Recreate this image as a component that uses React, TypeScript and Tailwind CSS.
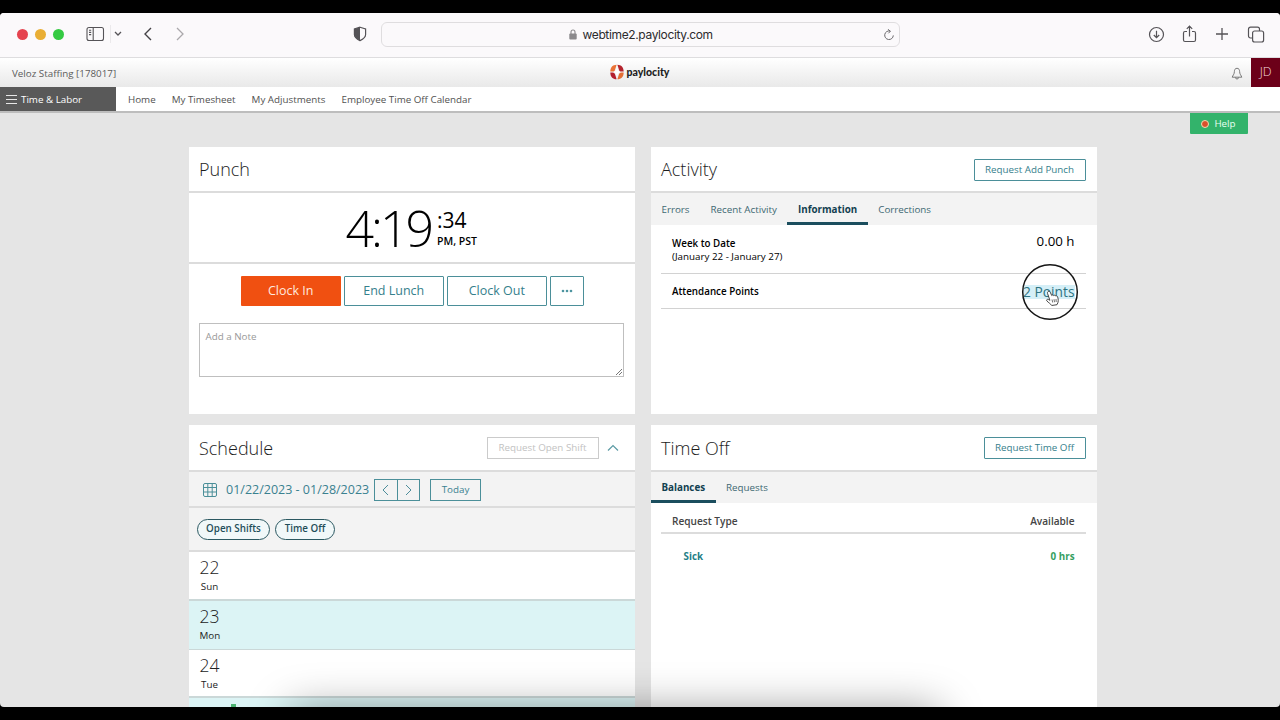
import React from "react";

/* --- SUB-COMPONENT: OUTLINE BUTTON --- */
const OutlineButton = ({ children, className = "" }: { children: React.ReactNode; className?: string }) => (
  <button className={`flex items-center justify-center border border-[#4b8f99] bg-white text-[#35808c] rounded-[1px] ${className}`}>
    {children}
  </button>
);

/* --- SUB-COMPONENT: CARD HEADER --- */
const CardHeader = ({ title, children, className = "" }: { title: string; children?: React.ReactNode; className?: string }) => (
  <div className={`flex items-center justify-between border-b-2 border-[#dcdcdc] pl-[10px] pr-[11px] ${className}`}>
    <h2 className="text-[18px] leading-[24px] font-light text-[#1c1c1c]">{title}</h2>
    {children}
  </div>
);

/* --- BROWSER TOOLBAR --- */
const BrowserBar = () => (
  <div className="flex h-[45px] shrink-0 items-center border-b border-[#dedddf] bg-[#fbf9fb] pb-[2px] text-[#555357]">
    <div className="ml-[17px] flex gap-[7px]">
      <span className="h-[11px] w-[11px] rounded-full bg-[#e5434f]" />
      <span className="h-[11px] w-[11px] rounded-full bg-[#e9ae35]" />
      <span className="h-[11px] w-[11px] rounded-full bg-[#35ca42]" />
    </div>

    <svg className="ml-[22px]" width="19" height="16" viewBox="0 0 19 16" fill="none" stroke="currentColor" strokeWidth="1.1">
      <rect x="1" y="1.5" width="16.5" height="13" rx="2" />
      <path d="M7.2 1.5v13M3 4.2h2.2M3 6.4h2.2M3 8.6h2.2" />
    </svg>
    <span className="ml-[5px] h-[18px] w-px bg-[#ebe9eb]" />
    <svg className="ml-[3px]" width="8" height="6" viewBox="0 0 8 6" fill="none" stroke="currentColor" strokeWidth="1.3">
      <path d="M1 1l3 3 3-3" />
    </svg>
    <svg className="ml-[21px]" width="10" height="14" viewBox="0 0 10 14" fill="none" stroke="#444246" strokeWidth="1.4">
      <path d="M8 1L2 7l6 6" />
    </svg>
    <svg className="ml-[22px]" width="10" height="14" viewBox="0 0 10 14" fill="none" stroke="#aaa8ab" strokeWidth="1.3">
      <path d="M2 1l6 6-6 6" />
    </svg>

    <svg className="ml-[168px]" width="14" height="16" viewBox="0 0 14 16" fill="none" stroke="currentColor" strokeWidth="1.2">
      <path d="M7 1.2L12.6 3v5.6c0 2.6-2.4 4.600-5.600 6-3.200-1.400-5.600-3.400-5.600-6V3z" />
      <path d="M7 1.200v13.400c-3.200-1.400-5.600-3.400-5.600-6V3z" fill="currentColor" stroke="none" />
    </svg>

    {/* Address field */}
    <div className="ml-[13.5px] flex h-[25px] w-[519px] items-center rounded-[6px] border border-[#dfdddf] pt-[1px] pr-[4px] font-['Inter',sans-serif]">
      <div className="ml-[187px] flex flex-1 items-center">
        <svg width="8" height="11" viewBox="0 0 8 11" fill="#8b898c">
          <rect x="0.3" y="4.5" width="7.4" height="6" rx="1" />
          <path d="M2 5V3a2 2 0 014 0v2" fill="none" stroke="#8b898c" strokeWidth="1.1" />
        </svg>
        <span className="ml-[6px] pt-[1px] text-[12px] leading-[16px] tracking-[-0.36px] text-[#2c2b2d]">webtime2.paylocity.com</span>
      </div>
      <svg width="12" height="12" viewBox="0 0 12 12" fill="none" stroke="#6b696c" strokeWidth="1">
        <path d="M7.2 2.1A4.3 4.3 0 1010.3 6.4M4.9 0.3L7.4 2.2 5.4 4.3" />
      </svg>
    </div>

    {/* Right side actions */}
    <svg className="ml-[248px]" width="17" height="17" viewBox="0 0 17 17" fill="none" stroke="currentColor" strokeWidth="1.2">
      <circle cx="8.5" cy="8.5" r="7" />
      <path d="M8.5 4.8v6.8M5.8 9l2.7 2.7L11.2 9" />
    </svg>
    <svg className="ml-[17px]" width="15" height="18" viewBox="0 0 15 18" fill="none" stroke="currentColor" strokeWidth="1.2">
      <path d="M5 6.5H3a1.5 1.5 0 00-1.5 1.5v7A1.5 1.5 0 003 16.5h9a1.5 1.5 0 001.5-1.5V8A1.5 1.5 0 0012 6.5h-2M7.5 11.5V1.3M4.8 3.9l2.7-2.7 2.7 2.7" />
    </svg>
    <svg className="ml-[18px]" width="14" height="14" viewBox="0 0 14 14" fill="none" stroke="currentColor" strokeWidth="1.3">
      <path d="M7 1v12M1 7h12" />
    </svg>
    <svg className="ml-[18px]" width="18" height="17" viewBox="0 0 18 17" fill="none" stroke="currentColor" strokeWidth="1.2">
      <rect x="5.6" y="5" width="11" height="11" rx="2" />
      <path d="M5.5 12H3.5a2 2 0 01-2-2V3.2a2 2 0 012-2h7a2 2 0 012 2V5" />
    </svg>
  </div>
);

/* --- COMPANY BAR + NAVIGATION --- */
const TopNav = () => (
  <>
    <div className="flex h-[29px] shrink-0 items-center justify-between bg-linear-to-b from-white to-[#e9e9e9]">
      <span className="w-[597px] pt-[3px] pl-[12px] text-[9.8px] leading-[14px] text-[#5b5b5b]">Veloz Staffing [178017]</span>
      <div className="flex items-center pr-[2px] pb-[2px]">
        <svg width="16" height="16" viewBox="0 0 16 16">
          <path d="M7.6.8C3.700 1 1.400 3.200 1.300 7.600h2.200c1.800 0 2.500-1.200 2.800-2.700z" fill="#ea7437" />
          <path d="M8.400.8c3.900.2 6.200 2.400 6.300 6.800h-2.200c-1.800 0-2.500-1.200-2.800-2.700z" fill="#b4242e" />
          <path d="M7.600 15.200c-3.900-.2-6.200-2.400-6.300-6.800h2.200c1.800 0 2.500 1.200 2.800 2.700z" fill="#b3202f" />
          <path d="M8.400 15.200c3.900-.2 6.200-2.400 6.300-6.800h-2.200c-1.800 0-2.500 1.200-2.800 2.700z" fill="#e46f35" />
          <path d="M8 3c.5 3.100 1.300 4.600 3.500 5-2.200.4-3 1.900-3.500 5-.5-3.100-1.300-4.600-3.500-5 2.200-.4 3-1.900 3.500-5z" fill="#fff" />
        </svg>
        <span className="ml-[2px] font-['Lato',sans-serif] text-[10.5px] leading-[14px] font-black text-[#1d1d22]">paylocity</span>
      </div>
      <div className="flex w-[597px] items-center justify-end gap-[8.5px]">
        <svg className="mt-[2px]" width="12" height="13" viewBox="0 0 12 13" fill="none" stroke="#6c6c6c" strokeWidth="0.9">
          <path d="M6 1.3c-1.9 0-2.6 1.5-2.6 3.2 0 2.7-1.700 4-2.200 5.700h9.600C10.300 8.500 8.600 7.200 8.600 4.500 8.600 2.800 7.900 1.300 6 1.300zM4.500 10.500a1.500 1.500 0 003 0" />
        </svg>
        <span className="flex h-[29px] w-[28.5px] items-center justify-center bg-[#6c0019] text-[12.5px] font-light text-[#f3d9de]">JD</span>
      </div>
    </div>

    <div className="flex h-[26px] shrink-0 items-stretch border-b-2 border-[#bdbdbd] bg-white text-[9.8px] text-[#515151]">
      <div className="flex w-[116px] items-center bg-[#595959] text-white">
        <svg className="ml-[6px]" width="11" height="10" viewBox="0 0 11 10" stroke="#e6e6e6" strokeWidth="1">
          <path d="M0 1.5h11M0 5.5h11M0 9.500h11" />
        </svg>
        <span className="ml-[4px] pt-[2px]">Time &amp; Labor</span>
      </div>
      <nav className="flex items-center gap-[16px] pt-[2px] pl-[12px]">
        <a>Home</a>
        <a>My Timesheet</a>
        <a>My Adjustments</a>
        <a>Employee Time Off Calendar</a>
      </nav>
    </div>
  </>
);

/* --- PUNCH --- */
const PunchCard = () => (
  <section className="h-[267px] bg-white">
    <CardHeader title="Punch" className="h-[46px]" />
    <div className="flex h-[71px] justify-center border-b-2 border-[#dcdcdc] pr-[1px]">
      <span className="text-[50px] leading-[70px] font-light tracking-[-3px] text-black">4:19</span>
      <div className="flex flex-col pt-[14px] pl-[6px] text-black">
        <span className="text-[21px] leading-[26px]">:34</span>
        <span className="text-[10.5px] leading-[16px] font-semibold">PM, PST</span>
      </div>
    </div>
    <div className="mt-[12px] flex justify-center gap-[3px] pl-[1px] text-[12.5px]">
      <button className="h-[30px] w-[100px] rounded-[1px] bg-[#f05011] text-[#ffe9df]">Clock In</button>
      <OutlineButton className="h-[30px] w-[100px]">End Lunch</OutlineButton>
      <OutlineButton className="h-[30px] w-[100px]">Clock Out</OutlineButton>
      <OutlineButton className="h-[30px] w-[34px]">
        <svg width="12" height="4" viewBox="0 0 12 4" fill="#4d94a0">
          <circle cx="2" cy="2" r="1.3" />
          <circle cx="6" cy="2" r="1.3" />
          <circle cx="10" cy="2" r="1.3" />
        </svg>
      </OutlineButton>
    </div>
    <div className="mr-[11px] ml-[10px] mt-[17px] flex h-[54px] justify-between border border-[#bfbfbf] pt-[5px] pl-[5.5px] text-[9.8px] leading-[15px] text-[#999]">
      <span>Add a Note</span>
      <svg className="self-end" width="8" height="8" viewBox="0 0 8 8" stroke="#666" strokeWidth="0.9">
        <path d="M1 7l6-6M4 7l3-3" />
      </svg>
    </div>
  </section>
);

/* --- ACTIVITY --- */
const ActivityCard = () => (
  <section className="h-[267px] bg-white">
    <CardHeader title="Activity" className="h-[46px]">
      <OutlineButton className="mt-[1px] h-[22px] w-[112px] pt-[1px] text-[9.8px]">Request Add Punch</OutlineButton>
    </CardHeader>
    <div className="flex h-[32px] bg-[#f3f3f3] text-[9.8px] leading-[33px] text-[#3d6872]">
      <span className="px-[10.5px]">Errors</span>
      <span className="px-[10.5px]">Recent Activity</span>
      <span className="border-b-[3px] border-[#1b4e5e] px-[10.5px] font-bold text-[#123f50]">Information</span>
      <span className="px-[10.5px]">Corrections</span>
    </div>
    <div className="mr-[11px] ml-[10px] flex h-[49px] justify-between border-b border-[#d2d2d2] px-[11px] text-black">
      <div className="pt-[12px] text-[9.8px] leading-[13px]">
        <p className="font-semibold">Week to Date</p>
        <p>(January 22 - January 27)</p>
      </div>
      <span className="pt-[7px] text-[13.3px] leading-[18px]">0.00 h</span>
    </div>
    <div className="mr-[11px] ml-[10px] flex h-[35px] items-center justify-between border-b border-[#d2d2d2] px-[11px]">
      <span className="pt-[3px] text-[9.8px] font-semibold text-black">Attendance Points</span>
      <span className="relative mt-[1px] bg-[#d5eff7] text-[13.8px] leading-[14px] text-[#2e7482]">
        2 Points
        {/* Pointer highlight */}
        <svg className="absolute -top-[22px] -left-[2px]" width="58" height="58" viewBox="0 0 58 58">
          <circle cx="29" cy="29" r="27.3" fill="none" stroke="#161616" strokeWidth="1.5" />
          <path d="M27.3 28.5c1-.5 1.700 0 2.100 1l1.300 3c.5-.8 1.600-.7 2 .1.700-.7 1.700-.4 2 .4.900-.5 1.700.1 2 1.100.7 2.400 1 4.600-.7 7.600l-5.300.8c-1.300-2-3.100-2.700-4.800-4.500-.9-1 .3-2.100 1.500-1.500l1.500.8-2.300-6.700c-.3-.9-.1-1.700.7-2.100z" fill="#fff" stroke="#333" strokeWidth="0.9" />
          <path d="M31 36.5l.7 3M33 36.2l.5 3M35 36l.2 3" stroke="#333" strokeWidth="0.7" />
        </svg>
      </span>
    </div>
  </section>
);

/* --- SCHEDULE --- */
const days = [
  { date: "22", name: "Sun", style: "h-[49px] border-b-2 bg-white" },
  { date: "23", name: "Mon", style: "h-[48.5px] border-b bg-[#dcf4f5]" },
  { date: "24", name: "Tue", style: "h-[48.5px] border-b-2 bg-white" },
];

const ScheduleCard = () => (
  <section className="h-[300px] bg-white">
    <CardHeader title="Schedule" className="h-[47px]">
      <div className="flex items-center pr-[5px]">
        <span className="flex h-[22px] w-[112px] items-center justify-center border border-[#cbcbcb] pt-[1px] text-[9.8px] text-[#c2c2c2]">Request Open Shift</span>
        <svg className="ml-[8px]" width="12" height="8" viewBox="0 0 12 8" fill="none" stroke="#5b9aa4" strokeWidth="1.2">
          <path d="M1 6.5l5-5 5 5" />
        </svg>
      </div>
    </CardHeader>
    <div className="flex h-[36px] items-center border-b-2 border-[#dcdcdc] bg-[#f3f3f3] pt-[1px] pl-[14px] text-[#3a8190]">
      <svg width="14" height="14" viewBox="0 0 14 14" fill="none" stroke="#4b8f99" strokeWidth="1">
        <rect x="0.5" y="0.5" width="13" height="13" rx="1.5" />
        <path d="M0.5 4.5h13M0.5 9h13M4.8 0.5v13M9.2 0.5v13" />
      </svg>
      <span className="ml-[9px] w-[143px] pt-[1px] text-[12.5px] whitespace-nowrap">01/22/2023 - 01/28/2023</span>
      <div className="ml-[5px] flex h-[22px] w-[46px] border border-[#4b8f99]">
        <span className="flex flex-1 items-center justify-center border-r border-[#4b8f99]">
          <svg width="7" height="12" viewBox="0 0 7 12" fill="none" stroke="currentColor" strokeWidth="0.9">
            <path d="M6 1L1 6l5 5" />
          </svg>
        </span>
        <span className="flex flex-1 items-center justify-center">
          <svg width="7" height="12" viewBox="0 0 7 12" fill="none" stroke="currentColor" strokeWidth="0.9">
            <path d="M1 1l5 5-5 5" />
          </svg>
        </span>
      </div>
      <span className="ml-[10px] flex h-[22px] w-[51px] items-center justify-center border border-[#4b8f99] pt-[1px] text-[9.8px]">Today</span>
    </div>
    <div className="flex h-[44px] items-center gap-[5px] border-b-2 border-[#dcdcdc] bg-[#f3f3f3] pl-[8px] text-[9.8px] font-semibold text-[#1f4e59]">
      <span className="flex h-[21px] w-[73px] items-center justify-center rounded-full border-[1.5px] border-[#2b5861] bg-[#f1f8f9] pt-[1px]">Open Shifts</span>
      <span className="flex h-[21px] w-[60px] items-center justify-center rounded-full border-[1.5px] border-[#2b5861] bg-[#f1f8f9] pt-[1px]">Time Off</span>
    </div>
    {days.map((day) => (
      <div key={day.date} className={`border-[#cbd8d8] pt-[3px] pl-[10.5px] ${day.style}`}>
        <p className="text-[17.5px] leading-[24px] font-light text-[#222]">{day.date}</p>
        <p className="w-[20px] pt-[1px] text-center text-[9.8px] leading-[14px] text-[#222]">{day.name}</p>
      </div>
    ))}
    <div className="flex h-[32px] justify-between bg-[#dcf4f5] pt-[3px] pr-[13px] pl-[10.5px]">
      <div className="flex gap-[12px]">
        <span className="text-[17.5px] leading-[24px] font-light text-[#222]">25</span>
        <span className="mt-[3px] h-[25px] w-[5px] bg-[#4db473]" />
      </div>
      <span className="pt-[3px] text-[9.3px] leading-[14px] font-semibold text-[#222]">07:00 AM - 03:30 PM (7.50h)</span>
    </div>
  </section>
);

/* --- TIME OFF --- */
const TimeOffCard = () => (
  <section className="h-[300px] bg-white">
    <CardHeader title="Time Off" className="h-[47px]">
      <OutlineButton className="h-[22px] w-[102px] pt-[1px] text-[9.8px]">Request Time Off</OutlineButton>
    </CardHeader>
    <div className="flex h-[31px] bg-[#f3f3f3] text-[9.8px] leading-[31px] text-[#3d6872]">
      <span className="border-b-[3px] border-[#1b4e5e] px-[10.5px] font-bold text-[#123f50]">Balances</span>
      <span className="px-[10.5px]">Requests</span>
    </div>
    <div className="mr-[11px] ml-[10px] flex h-[31px] items-center justify-between border-b-2 border-[#dcdcdc] px-[11px] pt-[8px] text-[10.1px] font-semibold text-[#444]">
      <span>Request Type</span>
      <span>Available</span>
    </div>
    <div className="mr-[11px] ml-[10px] flex justify-between pt-[15px] pr-[11px] pl-[22.5px] text-[9.8px] leading-[16px] font-bold">
      <span className="text-[#257f87]">Sick</span>
      <span className="text-[#36a05f]">0 hrs</span>
    </div>
  </section>
);

export default function App() {
  return (
    <div className="h-[720px] w-[1280px] overflow-hidden bg-black py-[13px] font-['Open_Sans',sans-serif]">
      <div className="relative flex h-[694px] flex-col overflow-hidden rounded-[4px] bg-[#e5e5e5]">
        <BrowserBar />
        <TopNav />
        <div className="flex h-[34px] shrink-0 justify-end pr-[32.5px]">
          <span className="flex h-[21px] w-[58px] items-center justify-center gap-[5px] rounded-b-[1px] bg-[#33b36b] pt-[1px] text-[9.8px] text-[#e9fff1]">
            <span className="h-[8px] w-[8px] rounded-full border border-[#f3dcb0] bg-[#d9512c]" />
            Help
          </span>
        </div>
        <main className="grid grid-cols-[445.5px_445.5px] gap-x-[16.5px] gap-y-[11px] pl-[189px]">
          <PunchCard />
          <ActivityCard />
          <ScheduleCard />
          <TimeOffCard />
        </main>
        {/* Shadow cast upward by the dock */}
        <div className="absolute top-[706px] left-[300px] h-[40px] w-[630px] shadow-[0_0_44px_9px_rgba(0,0,0,0.4)]" />
      </div>
    </div>
  );
}
